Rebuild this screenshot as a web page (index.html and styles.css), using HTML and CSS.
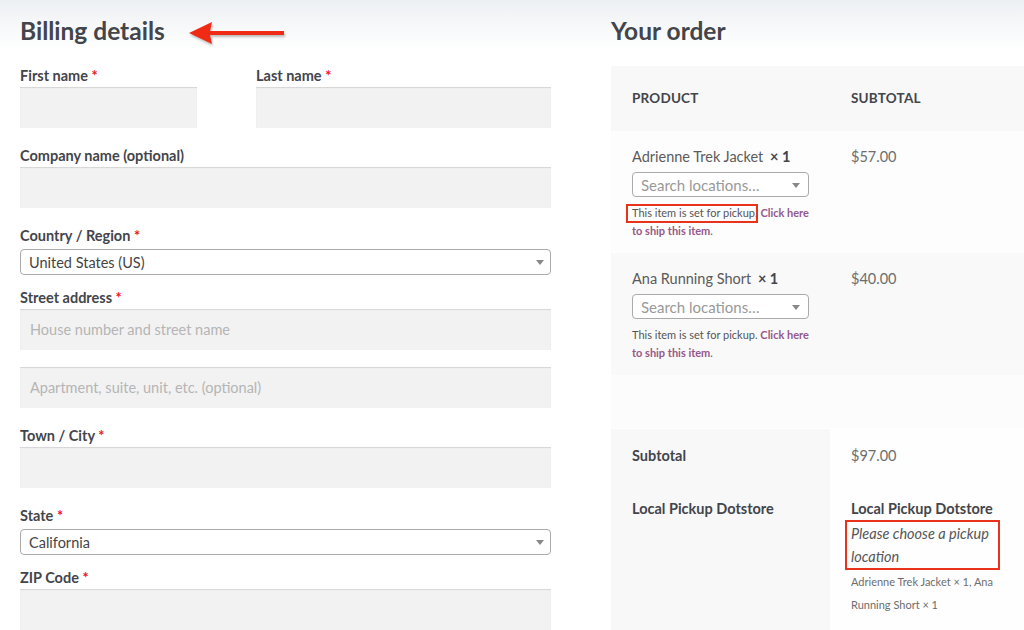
FILE: index.html
```html
<!DOCTYPE html>
<html lang="en">
<head>
    <meta charset="UTF-8">
    <meta name="viewport" content="width=device-width, initial-scale=1.0">
    <title>Checkout</title>
    <link rel="stylesheet" href="styles.css">
</head>
<body>
    <div class="checkout">
        <section class="billing">
            <h2 class="section-title">
                Billing details
                <svg class="arrow" width="96" height="24" viewBox="0 0 96 24">
                    <polygon points="0,12 23,1 21,10 95,10 95,14 21,14 23,23" fill="#ef2b16"/>
                </svg>
            </h2>

            <div class="field-split">
                <p class="field">
                    <label>First name <abbr class="required">*</abbr></label>
                    <input type="text" class="input-text">
                </p>
                <p class="field">
                    <label>Last name <abbr class="required">*</abbr></label>
                    <input type="text" class="input-text">
                </p>
            </div>

            <p class="field">
                <label>Company name (optional)</label>
                <input type="text" class="input-text">
            </p>

            <p class="field field-select">
                <label>Country / Region <abbr class="required">*</abbr></label>
                <span class="select-box">
                    <span class="select-value">United States (US)</span>
                    <b class="select-arrow"></b>
                </span>
            </p>

            <p class="field">
                <label>Street address <abbr class="required">*</abbr></label>
                <input type="text" class="input-text" placeholder="House number and street name">
                <input type="text" class="input-text input-second" placeholder="Apartment, suite, unit, etc. (optional)">
            </p>

            <p class="field">
                <label>Town / City <abbr class="required">*</abbr></label>
                <input type="text" class="input-text">
            </p>

            <p class="field field-select">
                <label>State <abbr class="required">*</abbr></label>
                <span class="select-box">
                    <span class="select-value">California</span>
                    <b class="select-arrow"></b>
                </span>
            </p>

            <p class="field">
                <label>ZIP Code <abbr class="required">*</abbr></label>
                <input type="text" class="input-text">
            </p>
        </section>

        <section class="order">
            <h2 class="section-title">Your order</h2>
            <table class="order-table">
                <colgroup>
                    <col class="col-product">
                    <col class="col-total">
                </colgroup>
                <thead>
                    <tr>
                        <th>Product</th>
                        <th>Subtotal</th>
                    </tr>
                </thead>
                <tbody>
                    <tr class="cart-item">
                        <td>
                            <div class="item-name">Adrienne Trek Jacket <strong class="qty">&times;&nbsp;1</strong></div>
                            <span class="select-box select-small">
                                <span class="select-placeholder">Search locations…</span>
                                <b class="select-arrow"></b>
                            </span>
                            <p class="pickup-note"><span class="marked">This item is set for pickup</span>. <a href="#">Click here to ship this item</a>.</p>
                        </td>
                        <td>$57.00</td>
                    </tr>
                    <tr class="cart-item">
                        <td>
                            <div class="item-name">Ana Running Short <strong class="qty">&times;&nbsp;1</strong></div>
                            <span class="select-box select-small">
                                <span class="select-placeholder">Search locations…</span>
                                <b class="select-arrow"></b>
                            </span>
                            <p class="pickup-note">This item is set for pickup. <a href="#">Click here to ship this item</a>.</p>
                        </td>
                        <td>$40.00</td>
                    </tr>
                    <tr class="cart-item empty-row">
                        <td></td>
                        <td></td>
                    </tr>
                </tbody>
                <tfoot>
                    <tr class="cart-subtotal">
                        <th>Subtotal</th>
                        <td>$97.00</td>
                    </tr>
                    <tr class="shipping">
                        <th>Local Pickup Dotstore</th>
                        <td>
                            <strong class="method-name">Local Pickup Dotstore</strong>
                            <em class="choose-location">Please choose a pickup location</em>
                            <p class="package-items">Adrienne Trek Jacket &times; 1, Ana Running Short &times; 1</p>
                        </td>
                    </tr>
                </tfoot>
            </table>
        </section>
    </div>
</body>
</html>
```

FILE: styles.css
```css
body {
    margin: 0;
    padding: 0;
    font-family: Lato, "Open Sans", Arial, sans-serif;
    color: #6d6d6d;
    background: linear-gradient(#edf0f3 0, #ffffff 50px) no-repeat #fff;
    overflow: hidden;
}
.checkout {
    display: flex;
    gap: 60px;
    padding-left: 20px;
}
.billing {
    width: 531px;
    flex-shrink: 0;
}
.order {
    width: 420px;
    flex-shrink: 0;
}
.section-title {
    display: flex;
    align-items: center;
    gap: 24px;
    margin: 16px 0 20px;
    font-size: 24.5px;
    line-height: 30px;
    font-weight: 700;
    color: #43454b;
}
.arrow {
    margin-top: 4px;
    filter: drop-shadow(1px 2px 1px rgba(0, 0, 0, 0.25));
}

/* billing form */
.field {
    margin: 0 0 18px;
}
.field label {
    display: block;
    margin-bottom: 1px;
    font-size: 14.5px;
    line-height: 20px;
    font-weight: 700;
    color: #43454b;
}
.required {
    color: #f0141e;
    text-decoration: none;
    border: none;
}
.field-split {
    display: flex;
    justify-content: space-between;
}
.field-split .field:first-child {
    width: 177px;
}
.field-split .field:last-child {
    width: 295px;
}
.input-text {
    display: block;
    box-sizing: border-box;
    width: 100%;
    height: 41px;
    padding: 0 10px;
    border: none;
    background-color: #f2f2f2;
    box-shadow: inset 0 1px 1px rgba(0, 0, 0, 0.12);
    font-family: inherit;
    font-size: 14.5px;
    color: #43454b;
    outline: none;
}
.input-text::placeholder {
    color: #b5b5b5;
}
.input-second {
    margin-top: 17px;
}
.field-select {
    margin-bottom: 13px;
}
.field-select .select-box {
    margin-top: 3px;
}

/* select2-like box */
.select-box {
    position: relative;
    display: flex;
    align-items: center;
    box-sizing: border-box;
    height: 26px;
    padding: 0 24px 0 8px;
    background-color: #fff;
    border: 1px solid #aaa;
    border-radius: 4px;
    font-size: 14.5px;
    color: #444;
}
.select-arrow {
    position: absolute;
    top: 50%;
    right: 6px;
    margin-top: -2px;
    border-style: solid;
    border-width: 5px 4px 0 4px;
    border-color: #888 transparent transparent transparent;
}
.select-small {
    width: 177px;
    height: 25px;
    margin-top: 5px;
    font-size: 15px;
}
.select-small .select-arrow {
    right: 8px;
}
.select-placeholder {
    color: #999;
}

/* order review table */
.order-table {
    width: 420px;
    table-layout: fixed;
    border-collapse: collapse;
    font-size: 14.5px;
    line-height: 20px;
}
.order-table col.col-product {
    width: 219px;
}
.order-table th {
    text-align: left;
    font-weight: 700;
    color: #43454b;
}
.order-table th,
.order-table td {
    vertical-align: top;
    padding: 16px 21px 13px;
}
.order-table thead th {
    padding: 22px 21px 23px;
    background-color: #f8f8f8;
    font-size: 13.5px;
    text-transform: uppercase;
    letter-spacing: 0.2px;
}
.order-table tbody td {
    background-color: #fdfdfd;
}
.order-table tbody tr:nth-child(even) td {
    background-color: #f9f9f9;
}
.order-table tbody .empty-row td {
    height: 53px;
    padding: 0;
    background-color: #fcfcfc;
}
.item-name {
    color: #5b5b5b;
}
.qty {
    margin-left: 3px;
    color: #43454b;
}
.pickup-note {
    margin: 7px 0 0;
    font-size: 11px;
    line-height: 18px;
    color: #555;
}
.pickup-note a {
    color: #96588a;
    font-weight: 700;
    text-decoration: none;
}
.marked {
    position: relative;
}
.marked::after {
    content: "";
    position: absolute;
    left: -6px;
    right: -3px;
    top: -2px;
    bottom: -4px;
    border: 2px solid #e8321c;
}
.order-table tfoot th,
.order-table tfoot td {
    padding-top: 17px;
    padding-bottom: 16px;
}
.order-table tfoot th {
    background-color: #f8f8f8;
}
.order-table tfoot td {
    background-color: #fefefe;
}
.order-table tfoot tr.cart-subtotal th,
.order-table tfoot tr.cart-subtotal td {
    border-top: 1px solid #fff;
}
.method-name {
    display: block;
    color: #43454b;
}
.choose-location {
    display: inline-block;
    width: 143px;
    margin: 1px 0 0 -6px;
    padding: 0 4px;
    border: 2px solid #e8321c;
    font-size: 14.5px;
    line-height: 23px;
    color: #555;
}
.package-items {
    margin: 0;
    width: 150px;
    font-size: 11px;
    line-height: 23px;
    color: #6d6d6d;
}
```
